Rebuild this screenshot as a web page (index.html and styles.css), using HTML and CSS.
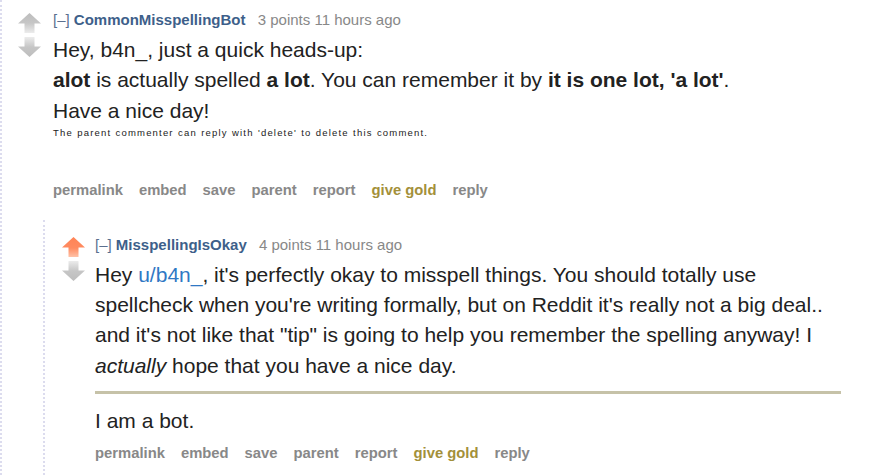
FILE: index.html
```html
<!DOCTYPE html>
<html>
<head>
<meta charset="utf-8">
<link rel="stylesheet" href="styles.css">
</head>
<body>
<div class="thread">
  <div class="comment">
    <div class="main">
      <div class="midcol">
        <svg class="arrow" viewBox="0 0 23 20" width="23" height="20"><defs><linearGradient id="g1" x1="0" y1="0" x2="0" y2="1"><stop offset="0" stop-color="#bdbdbd"/><stop offset="0.5" stop-color="#c6c6c6"/><stop offset="1" stop-color="#ececec"/></linearGradient></defs><path d="M11.5 0 L23 10.5 L16.5 10.5 L16.5 20 L6.5 20 L6.5 10.5 L0 10.5 Z" fill="url(#g1)"/></svg>
        <svg class="arrow" viewBox="0 0 23 20" width="23" height="20"><defs><linearGradient id="g2" x1="0" y1="1" x2="0" y2="0"><stop offset="0" stop-color="#bdbdbd"/><stop offset="0.5" stop-color="#c6c6c6"/><stop offset="1" stop-color="#ececec"/></linearGradient></defs><path d="M11.5 20 L23 9.5 L16.5 9.5 L16.5 0 L6.5 0 L6.5 9.5 L0 9.5 Z" fill="url(#g2)"/></svg>
      </div>
      <div class="entry">
        <p class="tagline"><span class="expand">[–]</span> <span class="author">CommonMisspellingBot</span> <span class="score">3 points 11 hours ago</span></p>
        <div class="md">
          <p>Hey, b4n_, just a quick heads-up:</p>
          <p><strong>alot</strong> is actually spelled <strong>a lot</strong>. You can remember it by <strong>it is one lot, 'a lot'</strong>.</p>
          <p>Have a nice day!</p>
          <p class="sup">The parent commenter can reply with 'delete' to delete this comment.</p>
        </div>
        <ul class="buttons top-gap">
          <li>permalink</li><li>embed</li><li>save</li><li>parent</li><li>report</li><li class="gold">give gold</li><li>reply</li>
        </ul>
      </div>
    </div>
    <div class="child">
      <div class="comment">
        <div class="main">
          <div class="midcol">
            <svg class="arrow" viewBox="0 0 23 20" width="23" height="20"><defs><linearGradient id="g3" x1="0" y1="0" x2="0" y2="1"><stop offset="0" stop-color="#ff8456"/><stop offset="0.55" stop-color="#ff8b60"/><stop offset="1" stop-color="#ffc2a8"/></linearGradient></defs><path d="M11.5 0 L23 10.5 L16.5 10.5 L16.5 20 L6.5 20 L6.5 10.5 L0 10.5 Z" fill="url(#g3)"/></svg>
            <svg class="arrow" viewBox="0 0 23 20" width="23" height="20"><defs><linearGradient id="g4" x1="0" y1="1" x2="0" y2="0"><stop offset="0" stop-color="#bdbdbd"/><stop offset="0.5" stop-color="#c6c6c6"/><stop offset="1" stop-color="#ececec"/></linearGradient></defs><path d="M11.5 20 L23 9.5 L16.5 9.5 L16.5 0 L6.5 0 L6.5 9.5 L0 9.5 Z" fill="url(#g4)"/></svg>
          </div>
          <div class="entry">
            <p class="tagline"><span class="expand">[–]</span> <span class="author">MisspellingIsOkay</span> <span class="score">4 points 11 hours ago</span></p>
            <div class="md">
              <p>Hey <span class="link">u/b4n_</span>, it's perfectly okay to misspell things. You should totally use spellcheck when you're writing formally, but on Reddit it's really not a big deal.. and it's not like that "tip" is going to help you remember the spelling anyway! I <em>actually</em> hope that you have a nice day.</p>
              <hr>
              <p>I am a bot.</p>
            </div>
            <ul class="buttons">
              <li>permalink</li><li>embed</li><li>save</li><li>parent</li><li>report</li><li class="gold">give gold</li><li>reply</li>
            </ul>
          </div>
        </div>
      </div>
    </div>
  </div>
</div>
</body>
</html>
```

FILE: styles.css
```css
html, body {
  margin: 0;
  padding: 0;
  background: #fff;
  font-family: "Liberation Sans", Arial, sans-serif;
  color: #222;
}

.thread {
  margin-left: 0;
  border-left: 2px dotted #dcdcee;
  min-height: 476px;
  box-sizing: border-box;
}

.main {
  display: flex;
  align-items: flex-start;
}

.midcol {
  display: flex;
  flex-direction: column;
  gap: 4px;
  width: 23px;
  margin-left: 16px;
  margin-top: 13px;
  margin-right: 12px;
}

.arrow {
  display: block;
}

.entry {
  flex: 1;
  min-width: 0;
}

.tagline {
  margin: 10px 0 0;
  font-size: 15px;
  line-height: 20px;
  color: #888;
  white-space: nowrap;
}

.expand {
  color: #5a6f8f;
  font-weight: normal;
}

.author {
  color: #3e5f8a;
  font-weight: bold;
  margin-right: 8px;
}

.md {
  margin-top: 5px;
  font-size: 21px;
  line-height: 30.3px;
  color: #222;
  max-width: 750px;
}

.md p {
  margin: 0;
}

.md .sup {
  font-size: 9.5px;
  line-height: 12px;
  letter-spacing: 1.18px;
  word-spacing: 0.5px;
  margin-top: 1px;
}

.md hr {
  border: 0;
  height: 3px;
  background: #c6c2a8;
  margin: 10px 0 12px;
  width: 746px;
}

.link {
  color: #2f78c4;
}

.buttons {
  list-style: none;
  margin: 0;
  padding: 0;
  display: flex;
  gap: 16px;
  font-size: 14.8px;
  line-height: 20px;
  font-weight: bold;
  color: #888;
  white-space: nowrap;
  margin-top: 7px;
}

.buttons.top-gap {
  margin-top: 41px;
}

.buttons .gold {
  color: #a3903a;
}

.child {
  margin-left: 41px;
  margin-top: 20px;
  border-left: 2px dotted #dcdcee;
  padding-top: 5px;
  min-height: 258px;
}

.child .midcol {
  margin-left: 17px;
  margin-top: 12px;
  margin-right: 10px;
}
```
